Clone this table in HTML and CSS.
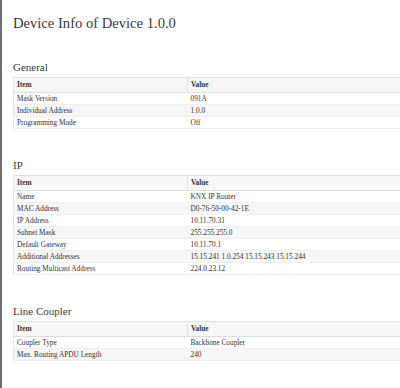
FILE: index.html
```html
<!DOCTYPE html>
<html lang="en">
  <head>
    <meta charset="UTF-8" />
    <meta name="viewport" content="width=device-width, initial-scale=1.0" />
    <title>Device Info</title>
    <link rel="stylesheet" href="styles.css">
  </head>
  <body>
    <div class="page">
      <h1>Device Info of Device 1.0.0</h1>

      <section class="info">
        <h2>General</h2>
        <table class="info-table">
          <thead>
            <tr><th>Item</th><th>Value</th></tr>
          </thead>
          <tbody>
            <tr><td>Mask Version</td><td>091A</td></tr>
            <tr><td>Individual Address</td><td>1.0.0</td></tr>
            <tr><td>Programming Mode</td><td>Off</td></tr>
          </tbody>
        </table>
      </section>

      <section class="info">
        <h2>IP</h2>
        <table class="info-table">
          <thead>
            <tr><th>Item</th><th>Value</th></tr>
          </thead>
          <tbody>
            <tr><td>Name</td><td>KNX IP Router</td></tr>
            <tr><td>MAC Address</td><td>D0-76-50-00-42-1E</td></tr>
            <tr><td>IP Address</td><td>10.11.70.31</td></tr>
            <tr><td>Subnet Mask</td><td>255.255.255.0</td></tr>
            <tr><td>Default Gateway</td><td>10.11.70.1</td></tr>
            <tr><td>Additional Addresses</td><td>15.15.241 1.0.254 15.15.243 15.15.244</td></tr>
            <tr><td>Routing Multicast Address</td><td>224.0.23.12</td></tr>
          </tbody>
        </table>
      </section>

      <section class="info">
        <h2>Line Coupler</h2>
        <table class="info-table">
          <thead>
            <tr><th>Item</th><th>Value</th></tr>
          </thead>
          <tbody>
            <tr><td>Coupler Type</td><td>Backbone Coupler</td></tr>
            <tr><td>Max. Routing APDU Length</td><td>240</td></tr>
          </tbody>
        </table>
      </section>
    </div>
  </body>
</html>
```

FILE: styles.css
```css
html,
body {
  margin: 0;
  padding: 0;
  background: #ffffff;
}
body {
  font-family: "Liberation Serif", "DejaVu Serif", serif;
  color: #333333;
}
.page {
  border-left: 2px solid #6e6d74;
  padding: 14px 0 0 11px;
  min-height: 374px;
  overflow: hidden;
}
h1,
h2 {
  font-family: "Liberation Serif", "DejaVu Serif", serif;
  font-weight: normal;
  color: #3a3a3a;
}
h1 {
  margin: 0;
  font-size: 14.6px;
  line-height: 18px;
}
.info {
  margin-top: 28px;
}
.info + .info {
  margin-top: 29px;
}
h2 {
  margin: 0 0 3px;
  font-size: 11px;
  line-height: 14px;
}
.info-table {
  width: 390px;
  border-collapse: collapse;
  table-layout: fixed;
  border: 1px solid #e2e2e2;
  font-size: 7.3px;
}
.info-table th,
.info-table td {
  text-align: left;
  padding: 0 3px;
  white-space: nowrap;
  overflow: hidden;
}
.info-table th:first-child,
.info-table td:first-child {
  width: 167px;
}
.info-table th {
  background: #f7f7f7;
  line-height: 14px;
  font-weight: bold;
  border-bottom: 1px solid #dedede;
}
.info-table th + th {
  border-left: 1px solid #e2e2e2;
}
.info-table td {
  line-height: 11px;
  border-bottom: 1px solid #efefef;
}
.info-table tbody tr:nth-child(even) td {
  background: #f6f6f6;
}
```
